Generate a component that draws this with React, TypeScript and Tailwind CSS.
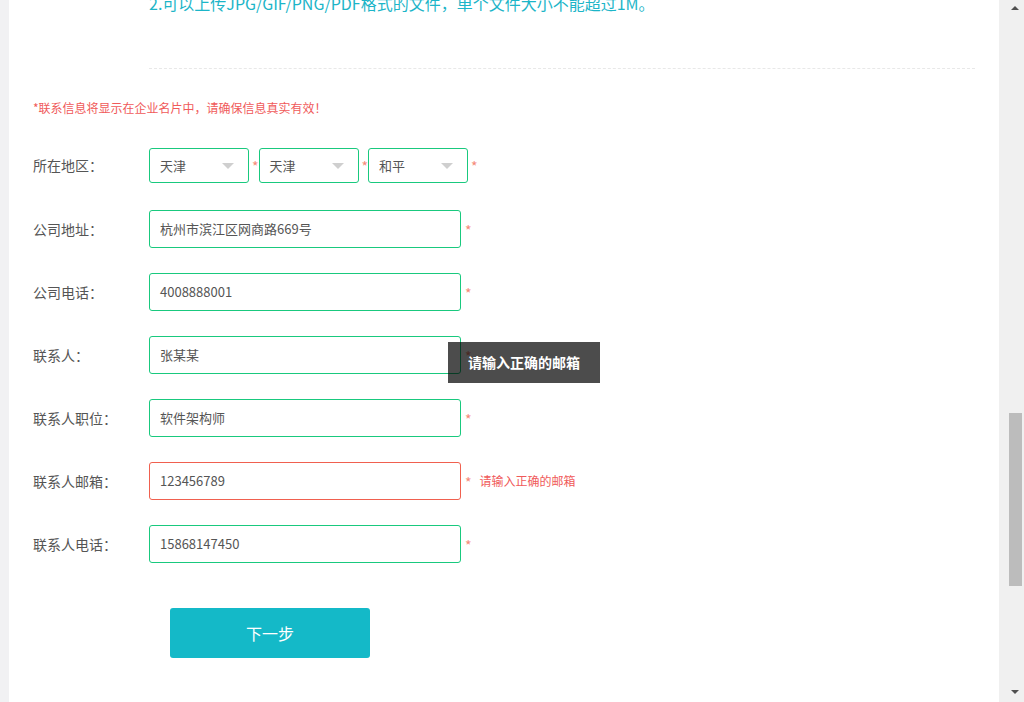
import React from 'react';

const font = { fontFamily: '"Noto Sans CJK SC", "Noto Sans", sans-serif' };

const Star = () => <span className="ml-[3px] text-[14px] text-[#f58a7a] leading-none">*</span>;

const Select: React.FC<{ value: string }> = ({ value }) => (
  <div className="w-[100px] h-[35px] border border-[#19c97e] rounded-[3px] flex items-center justify-between pl-[10px] pr-[14px]">
    <span className="text-[13px] text-[#555]">{value}</span>
    <span className="w-0 h-0 border-l-[6px] border-r-[6px] border-t-[6px] border-l-transparent border-r-transparent border-t-[#cfcfcf]" />
  </div>
);

const Field: React.FC<{ label: string; value: string; error?: boolean; tip?: boolean }> = ({
  label,
  value,
  error,
  tip,
}) => (
  <div className="flex items-center h-[38px] mt-[25px]">
    <div className="w-[116px] text-[14px] text-[#555]">{label}</div>
    <div className="relative flex items-center">
      <div
        className={
          'w-[312px] h-[38px] border rounded-[3px] flex items-center pl-[10px] text-[13px] text-[#555] ' +
          (error ? 'border-[#f0604f]' : 'border-[#19c97e]')
        }
      >
        {value}
      </div>
      <span className="ml-[1px]">
        <Star />
      </span>
      {error && <span className="ml-[8px] text-[12px] text-[#f05a5a]">请输入正确的邮箱</span>}
      {tip && (
        <div className="absolute left-[299px] top-[6px] w-[152px] h-[41px] bg-black/70 text-white text-[14px] font-bold flex items-center pl-[20px]">
          请输入正确的邮箱
        </div>
      )}
    </div>
  </div>
);

export default function App() {
  return (
    <div className="w-[1024px] h-[702px] flex overflow-hidden bg-white" style={font}>
      <div className="w-[9px] bg-[#f1f1f3]" />
      <div className="flex-1 pl-[24px] overflow-hidden">
        <div className="-mt-[9px] pl-[116px] text-[16px] leading-[24px] text-[#1cb5c8]">
          2.可以上传JPG/GIF/PNG/PDF格式的文件，单个文件大小不能超过1M。
        </div>
        <div className="ml-[116px] mt-[53px] w-[826px] border-t border-dashed border-[#e8e8e8]" />
        <div className="mt-[31px] text-[12px] leading-[16px] text-[#f05a5a]">*联系信息将显示在企业名片中，请确保信息真实有效！</div>
        <div className="flex items-center h-[35px] mt-[32px]">
          <div className="w-[116px] text-[14px] text-[#555]">所在地区：</div>
          <Select value="天津" />
          <Star />
          <Select value="天津" />
          <Star />
          <Select value="和平" />
          <Star />
        </div>
        <div className="pt-[2px]">
          <Field label="公司地址：" value="杭州市滨江区网商路669号" />
        </div>
        <Field label="公司电话：" value="4008888001" />
        <Field label="联系人：" value="张某某" tip />
        <Field label="联系人职位：" value="软件架构师" />
        <Field label="联系人邮箱：" value="123456789" error />
        <Field label="联系人电话：" value="15868147450" />
        <div className="mt-[45px] ml-[137px] w-[200px] h-[50px] rounded-[3px] bg-[#14b9c8] text-white text-[16px] flex items-center justify-center">
          下一步
        </div>
      </div>
      <div className="w-[25px] bg-[#f0f0f0] flex flex-col items-center">
        <span className="mt-[6px] ml-[7px] w-0 h-0 border-l-[4px] border-r-[4px] border-b-[4px] border-l-transparent border-r-transparent border-b-[#505050]" />
        <div className="mt-[403px] ml-[7px] w-[13px] h-[173px] bg-[#bcbcbc]" />
        <div className="flex-1" />
        <span className="mb-[8px] ml-[7px] w-0 h-0 border-l-[4px] border-r-[4px] border-t-[4px] border-l-transparent border-r-transparent border-t-[#505050]" />
      </div>
    </div>
  );
}
